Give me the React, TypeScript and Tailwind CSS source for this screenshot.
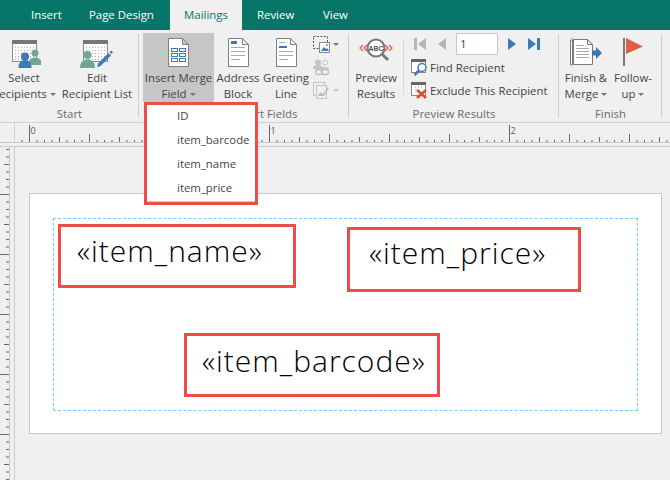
import * as React from "react";

const TABS = [
  { label: "Insert", width: "w-[89px]", active: false, pad: "pl-[31px]" },
  { label: "Page Design", width: "w-[81px]", active: false, pad: "" },
  { label: "Mailings", width: "w-[72px]", active: true, pad: "justify-center" },
  { label: "Review", width: "w-[81px]", active: false, pad: "pl-[15px]" },
  { label: "View", width: "w-[60px]", active: false, pad: "" },
];

const FIELDS = ["ID", "item_barcode", "item_name", "item_price"];

function Caret({ color = "#777" }: { color?: string }) {
  return (
    <svg width="6" height="3" viewBox="0 0 6 3" className="ml-[3px] inline-block align-middle">
      <path d="M0 0h6L3 3z" fill={color} />
    </svg>
  );
}

function Calendar({ x = 0, y = 0 }: { x?: number; y?: number }) {
  const dots: React.ReactNode[] = [];
  for (let r = 0; r < 5; r++) {
    for (let c = 0; c < 7; c++) {
      dots.push(<rect key={`${r}-${c}`} x={x + 3 + c * 3} y={y + 7 + r * 3} width="1" height="1" fill="#aaa" />);
    }
  }
  return (
    <g>
      <rect x={x + 0.5} y={y + 0.5} width="24" height="21" fill="#fff" stroke="#8a8a8a" />
      <rect x={x} y={y} width="25" height="4" fill="#777" />
      {dots}
    </g>
  );
}

function SelectIcon() {
  return (
    <svg width="34" height="32" viewBox="0 0 34 32">
      <Calendar x={5} y={2} />
      <circle cx="28" cy="15" r="3.500" fill="#6fa596" />
      <path d="M21 27c0-5 3-7.500 7-7.500s7 2.500 7 7.500z" fill="#6fa596" />
      <circle cx="18" cy="18.500" r="4" fill="#3f78b5" />
      <path d="M11.500 30c0-5.500 2.500-8 6.500-8s6.500 2.500 6.500 8z" fill="#3f78b5" />
    </svg>
  );
}

function EditIcon() {
  return (
    <svg width="34" height="32" viewBox="0 0 34 32">
      <Calendar x={3} y={2} />
      <circle cx="7.500" cy="17" r="4" fill="#6fa596" />
      <path d="M0 30c0-6 3-8.500 7.500-8.500s7.500 2.500 7.500 8.500z" fill="#6fa596" />
      <path d="M17 29l1-3.500L28.500 15l2.500 2.500L20.500 28z" fill="#3f78b5" />
      <path d="M29.500 14l1.500-1.500 2 2-1.500 1.500z" fill="#3f78b5" />
    </svg>
  );
}

function DocShape() {
  return <path d="M.5.5h14l6 6v22H.5z M14.500.5v6h6" fill="#fff" stroke="#808080" />;
}

function MergeFieldIcon() {
  return (
    <svg width="21" height="29" viewBox="0 0 21 29">
      <DocShape />
      {[10, 15, 20].map((y) => (
        <g key={y}>
          <rect x="3.500" y={y + 0.5} width="6" height="3" fill="none" stroke="#3f78b5" />
          <rect x="11.500" y={y + 0.5} width="6" height="3" fill="none" stroke="#3f78b5" />
        </g>
      ))}
    </svg>
  );
}

function AddressIcon() {
  return (
    <svg width="21" height="29" viewBox="0 0 21 29">
      <DocShape />
      <rect x="3" y="3" width="6" height="3" fill="#3f78b5" />
      {[9, 13, 17, 21].map((y) => (
        <rect key={y} x="3" y={y} width={y === 21 ? 9 : 14} height="1" fill="#aaa" />
      ))}
    </svg>
  );
}

function GreetingIcon() {
  return (
    <svg width="21" height="29" viewBox="0 0 21 29">
      <DocShape />
      <rect x="3" y="4" width="6" height="1" fill="#aaa" />
      <rect x="3" y="8" width="8" height="2" fill="#3f78b5" />
      {[13, 17, 21].map((y) => (
        <rect key={y} x="3" y={y} width={y === 21 ? 9 : 14} height="1" fill="#aaa" />
      ))}
    </svg>
  );
}

function RulesIcon() {
  return (
    <svg width="17" height="17" viewBox="0 0 17 17">
      <rect x=".5" y=".5" width="14" height="12" fill="none" stroke="#555" strokeDasharray="2 1.500" />
      <rect x="6.500" y="6.500" width="10" height="10" fill="#fff" stroke="#888" />
      <path d="M8 15l3-4 2 2 1-1 2 3z" fill="#3f78b5" />
      <rect x="13" y="8" width="2" height="2" fill="#e2a13c" />
    </svg>
  );
}

function MatchFieldsIcon() {
  return (
    <svg width="17" height="17" viewBox="0 0 17 17">
      <circle cx="5" cy="3.500" r="3" fill="#c4c4c4" />
      <path d="M0 10c0-3 2-4 5-4s5 1 5 4z" fill="#c4c4c4" />
      <circle cx="12" cy="3.500" r="2.500" fill="none" stroke="#c4c4c4" />
      <path d="M10 9h6" stroke="#c4c4c4" strokeWidth="1.500" />
      <rect x="2.500" y="10.500" width="7" height="5" rx="2.500" fill="none" stroke="#bdbdbd" strokeWidth="1.300" />
      <rect x="8.500" y="10.500" width="7" height="5" rx="2.500" fill="none" stroke="#bdbdbd" strokeWidth="1.300" />
    </svg>
  );
}

function UpdateIcon() {
  return (
    <svg width="17" height="17" viewBox="0 0 17 17">
      <rect x=".5" y=".5" width="11" height="13" fill="none" stroke="#c4c4c4" />
      <rect x="3.500" y="3.500" width="10" height="13" fill="#f0f0f0" stroke="#c4c4c4" />
      <path d="M5 14l2-4 3 2 5-7 1 1-5 8z" fill="#bdbdbd" />
    </svg>
  );
}

function PreviewIcon() {
  return (
    <svg width="34" height="28" viewBox="0 0 34 28">
      <g fill="none" stroke="#dd6044" strokeWidth="1.300">
        <path d="M4 7L1 10l3 3M8 7l-3 3 3 3M12 7l-3 3 3 3" />
        <path d="M22 7l3 3-3 3M26 7l3 3-3 3M30 7l3 3-3 3" />
      </g>
      <circle cx="17" cy="10" r="8.500" fill="#fff" stroke="#777" strokeWidth="2" />
      <path d="M23 16l6 6" stroke="#777" strokeWidth="3" />
      <text x="17" y="12.500" textAnchor="middle" fontSize="7" fontWeight="700" fill="#555" fontFamily="'Liberation Sans', sans-serif">
        ABC
      </text>
    </svg>
  );
}

function MiniCalendar() {
  return (
    <g>
      <rect x=".5" y=".5" width="14" height="13" fill="#fff" stroke="#888" />
      <rect x="0" y="0" width="15" height="3" fill="#666" />
    </g>
  );
}

function FindIcon() {
  return (
    <svg width="17" height="18" viewBox="0 0 17 18">
      <MiniCalendar />
      <circle cx="11" cy="8.500" r="4" fill="#fff" stroke="#3f78b5" strokeWidth="1.500" />
      <path d="M8 11.500L3.500 16" stroke="#3f78b5" strokeWidth="2.500" />
    </svg>
  );
}

function ExcludeIcon() {
  return (
    <svg width="17" height="17" viewBox="0 0 17 17">
      <MiniCalendar />
      <path d="M4 5h1M7 5h1M10 5h1M4 8h1M7 8h1" stroke="#999" />
      <path d="M6 8l9 8M15 8l-9 8" stroke="#dd4a2c" strokeWidth="2.500" />
    </svg>
  );
}

function FinishIcon() {
  return (
    <svg width="33" height="28" viewBox="0 0 33 28">
      <path d="M.5 2h2v25H.5zM3 .500h-1" fill="#fff" stroke="#777" />
      <path d="M3.500 1.500h14l5 5v20h-19z M17.500 1.500v5h5" fill="#fff" stroke="#777" />
      {[7, 10, 13, 16, 19].map((y) => (
        <rect key={y} x="6" y={y} width={y === 7 ? 8 : 13} height="1" fill="#aaa" />
      ))}
      <rect x="22" y="12.500" width="6" height="5" fill="#3f78b5" />
      <path d="M26 9l6 6-6 6z" fill="#3f78b5" />
    </svg>
  );
}

function FlagIcon() {
  return (
    <svg width="21" height="29" viewBox="0 0 21 29">
      <rect x="0" y="0" width="2" height="28" fill="#777" />
      <path d="M3 0l17 8.500L3 16z" fill="#dd6044" />
    </svg>
  );
}

function NavIcon({ kind, on }: { kind: "first" | "prev" | "next" | "last"; on: boolean }) {
  const fill = on ? "#3f78b5" : "#b5b5b5";
  const paths = {
    first: "M0 0h3v12H0zM12 0v12L4 6z",
    prev: "M8 0v12L0 6z",
    next: "M0 0v12l8-6z",
    last: "M0 0v12l8-6zM9 0h3v12H9z",
  };
  return (
    <svg width={kind === "first" || kind === "last" ? 12 : 8} height="12" viewBox={kind === "first" || kind === "last" ? "0 0 12 12" : "0 0 8 12"}>
      <path d={paths[kind]} fill={fill} />
    </svg>
  );
}

function RibbonButton({
  icon,
  lines,
  caret,
  className,
}: {
  icon: React.ReactNode;
  lines: [string, string];
  caret?: boolean;
  className: string;
}) {
  return (
    <div className={`flex h-[69px] shrink-0 flex-col items-center whitespace-nowrap ${className}`}>
      <div className="flex h-[39px] items-start justify-center pt-[5px]">{icon}</div>
      <div className="leading-[16px]">{lines[0]}</div>
      <div className="leading-[16px]">
        {lines[1]}
        {caret && <Caret />}
      </div>
    </div>
  );
}

function RibbonGroup({
  label,
  className,
  children,
}: {
  label: string;
  className: string;
  children: React.ReactNode;
}) {
  return (
    <div className={`relative flex h-full shrink-0 flex-col ${className}`}>
      <div className="flex h-[72px] pt-[3px]">{children}</div>
      <div className="mt-[4px] text-center leading-[16px] text-[#6a6a6a]">{label}</div>
      <div className="absolute right-0 top-[4px] h-[84px] w-px bg-[#cfcfcf]" />
    </div>
  );
}

function HorizontalRuler() {
  const ticks: React.ReactNode[] = [];
  for (let x = -15; x <= 640; x += 7.5) {
    const px = 29.5 + x;
    const top = x % 240 === 0 ? 2 : x % 60 === 0 ? 11 : x % 30 === 0 ? 14 : 17;
    ticks.push(<path key={x} d={`M${px} ${top}V19`} stroke="#666" />);
  }
  return (
    <svg width="655" height="19" viewBox="15 0 655 19" className="block">
      {ticks}
      {[
        ["0", 33],
        ["1", 273],
        ["2", 513],
      ].map(([t, x]) => (
        <text key={t} x={x} y="11" fontSize="9" textAnchor="middle" fill="#555" fontFamily="'Open Sans', sans-serif">
          {t}
        </text>
      ))}
    </svg>
  );
}

function VerticalRuler() {
  const ticks: React.ReactNode[] = [];
  for (let y = -45; y <= 290; y += 7.5) {
    const py = 47 + y;
    const left = y % 60 === 0 ? 0 : y % 30 === 0 ? 4 : 6;
    ticks.push(<path key={y} d={`M${left} ${py + 0.5}H9`} stroke="#666" />);
  }
  return (
    <svg width="10" height="333" viewBox="0 0 10 333" className="block">
      {ticks}
    </svg>
  );
}

function MergeBox({ children, className }: { children: string; className: string }) {
  return (
    <div className={`flex items-center border-[3px] border-[#ef4b47] text-[30px] font-light leading-none tracking-[1px] text-black ${className}`}>
      {children}
    </div>
  );
}

export default function App() {
  return (
    <div className="relative flex h-[480px] w-[670px] flex-col overflow-hidden bg-[#f0f0f0] font-['Open_Sans','Noto_Sans',sans-serif] text-[11.400px] text-[#444]">
      <div className="flex h-[30px] shrink-0 bg-[#077568] text-white">
        {TABS.map((t) => (
          <div
            key={t.label}
            className={`flex h-full shrink-0 items-center ${t.width} ${t.pad} ${t.active ? "bg-[#f0f0f0] text-[#077568]" : ""}`}
          >
            {t.label}
          </div>
        ))}
      </div>

      <div className="flex h-[93px] shrink-0 border-b border-[#d0d0d0]">
        <RibbonGroup label="Start" className="w-[139px] overflow-hidden">
          <RibbonButton className="-ml-[14px] w-[76px]" icon={<SelectIcon />} lines={["Select", "Recipients"]} caret />
          <RibbonButton className="w-[70px]" icon={<EditIcon />} lines={["Edit", "Recipient List"]} />
        </RibbonGroup>

        <RibbonGroup label="Write & Insert Fields" className="w-[210px]">
          <RibbonButton className="ml-[4px] w-[71px] bg-[#c6c6c6]" icon={<MergeFieldIcon />} lines={["Insert Merge", "Field"]} caret />
          <RibbonButton className="w-[48px]" icon={<AddressIcon />} lines={["Address", "Block"]} />
          <RibbonButton className="w-[48px]" icon={<GreetingIcon />} lines={["Greeting", "Line"]} />
          <div className="ml-[3px] flex flex-col gap-[6px] pt-[3px]">
            <div className="flex items-center">
              <RulesIcon />
              <Caret />
            </div>
            <MatchFieldsIcon />
            <div className="flex items-center">
              <UpdateIcon />
              <Caret color="#c4c4c4" />
            </div>
          </div>
        </RibbonGroup>

        <RibbonGroup label="Preview Results" className="w-[210px]">
          <RibbonButton className="w-[54px]" icon={<PreviewIcon />} lines={["Preview", "Results"]} />
          <div className="mt-[7px] h-[55px] w-px bg-[#d8d8d8]" />
          <div className="ml-[7px] flex flex-col">
            <div className="flex h-[22px] items-center">
              <div className="ml-[3px] flex w-[24px]">
                <NavIcon kind="first" on={false} />
              </div>
              <div className="flex w-[18px]">
                <NavIcon kind="prev" on={false} />
              </div>
              <div className="flex h-[22px] w-[42px] items-center border border-[#c6c6c6] bg-white pl-[3px]">1</div>
              <div className="ml-[10px] flex w-[20px]">
                <NavIcon kind="next" on />
              </div>
              <NavIcon kind="last" on />
            </div>
            <div className="mt-[3px] flex h-[19px] items-center gap-[2px] whitespace-nowrap">
              <FindIcon />
              <span>Find Recipient</span>
            </div>
            <div className="mt-[4px] flex h-[19px] items-center gap-[2px] whitespace-nowrap">
              <ExcludeIcon />
              <span>Exclude This Recipient</span>
            </div>
          </div>
        </RibbonGroup>

        <RibbonGroup label="Finish" className="w-[103px]">
          <RibbonButton className="ml-[3px] w-[48px]" icon={<FinishIcon />} lines={["Finish &", "Merge"]} caret />
          <RibbonButton className="w-[46px]" icon={<FlagIcon />} lines={["Follow-", "up"]} caret />
        </RibbonGroup>
      </div>

      <div className="flex h-[24px] shrink-0 flex-col border-b border-[#c8c8c8]">
        <div className="flex h-[19px]">
          <div className="w-[15px] shrink-0 border-r border-[#d0d0d0]" />
          <HorizontalRuler />
        </div>
        <div className="h-[5px] border-t border-[#c8c8c8]" />
      </div>

      <div className="flex min-h-0 flex-1">
        <div className="flex shrink-0">
          <div className="w-[10px] overflow-hidden border-r border-[#c8c8c8]">
            <VerticalRuler />
          </div>
          <div className="w-[5px] border-r border-[#c8c8c8]" />
        </div>
        <div className="min-w-0 flex-1 pl-[14px] pt-[46px]">
          <div className="h-[241px] w-[633px] border border-[#c8c8c8] bg-white pl-[23px] pt-[24px]">
            <div className="h-[193px] w-[585px] border border-dashed border-[#7ccdf5] pl-[4px] pt-[5px]">
              <div className="flex items-start">
                <MergeBox className="h-[64px] w-[238px] pb-[10px] pl-[16px]">«item_name»</MergeBox>
                <MergeBox className="ml-[51px] mt-[3px] h-[65px] w-[234px] pb-[14px] pl-[19px]">«item_price»</MergeBox>
              </div>
              <MergeBox className="ml-[126px] mt-[41px] h-[64px] w-[256px] pb-[8px] pl-[15px]">«item_barcode»</MergeBox>
            </div>
          </div>
        </div>
      </div>

      <div className="absolute left-[144px] top-[102px] h-[103px] w-[114px] border-[3px] border-[#ef4b47] bg-white pb-[1px] pl-[30px] shadow-[inset_0_-1px_0_#cfcfcf]">
        <div className="-mt-[1px]">
          {FIELDS.map((f) => (
            <div key={f} className="flex h-[24px] items-center whitespace-nowrap">
              {f}
            </div>
          ))}
        </div>
      </div>
    </div>
  );
}
